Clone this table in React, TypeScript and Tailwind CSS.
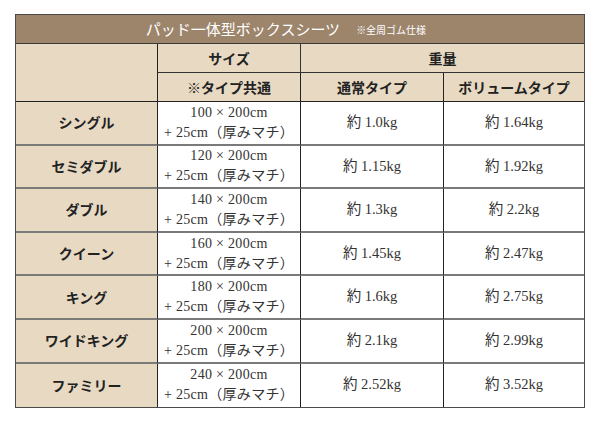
import React from "react";

type Row = { name: string; size: string; normal: string; volume: string };

const rows: Row[] = [
  { name: "シングル", size: "100 × 200cm", normal: "約 1.0kg", volume: "約 1.64kg" },
  { name: "セミダブル", size: "120 × 200cm", normal: "約 1.15kg", volume: "約 1.92kg" },
  { name: "ダブル", size: "140 × 200cm", normal: "約 1.3kg", volume: "約 2.2kg" },
  { name: "クイーン", size: "160 × 200cm", normal: "約 1.45kg", volume: "約 2.47kg" },
  { name: "キング", size: "180 × 200cm", normal: "約 1.6kg", volume: "約 2.75kg" },
  { name: "ワイドキング", size: "200 × 200cm", normal: "約 2.1kg", volume: "約 2.99kg" },
  { name: "ファミリー", size: "240 × 200cm", normal: "約 2.52kg", volume: "約 3.52kg" },
];

const sans = "font-['Noto_Sans_CJK_JP',sans-serif]";
const serif = "font-['Liberation_Serif','Noto_Sans_CJK_JP',serif]";

const App: React.FC = () => {
  return (
    <div className="h-[422px] w-[600px] bg-white pl-[15px] pt-[14px]">
      <div className="w-[570px] border border-[#4a4a4a]">
        <div
          className={`flex h-[29px] items-center justify-center gap-4 border-b border-[#3a3a3a] bg-[#9d856c] pr-[28px] text-white ${sans}`}
        >
          <span className="text-[15px]">パッド一体型ボックスシーツ</span>
          <span className="text-[10px]">※全周ゴム仕様</span>
        </div>
        <div
          className={`grid grid-cols-[142px_143px_143px_140px] grid-rows-[29px_29px_repeat(7,43.6px)] text-[14px] text-[#222] ${sans}`}
        >
          <div className="row-span-2 border-r border-b border-[#222] bg-[#e8d9c3]" />
          <div className="flex items-center justify-center border-r border-b border-[#333] bg-[#e8d9c3] font-bold">
            サイズ
          </div>
          <div className="col-span-2 flex items-center justify-center border-b border-[#333] bg-[#e8d9c3] font-bold">
            重量
          </div>
          <div className="flex items-center justify-center border-r border-b border-[#222] bg-[#e8d9c3] font-bold">
            ※タイプ共通
          </div>
          <div className="flex items-center justify-center border-r border-b border-[#222] bg-[#e8d9c3] font-bold">
            通常タイプ
          </div>
          <div className="flex items-center justify-center border-b border-[#222] bg-[#e8d9c3] font-bold">
            ボリュームタイプ
          </div>
          {rows.map((r, i) => {
            const bb = i < rows.length - 1 ? "border-b-2 border-b-[#7a7a7a]" : "";
            return (
              <React.Fragment key={r.name}>
                <div
                  className={`flex items-center justify-center border-r border-r-[#222] bg-[#e8d9c3] font-bold ${bb}`}
                >
                  {r.name}
                </div>
                <div
                  className={`flex flex-col items-center justify-center border-r border-r-[#222] text-[14px] leading-[20px] tracking-[0.3px] text-[#333] ${serif} ${bb}`}
                >
                  <span>{r.size}</span>
                  <span>+ 25cm（厚みマチ）</span>
                </div>
                <div
                  className={`flex items-center justify-center border-r border-r-[#222] text-[14.5px] text-[#333] ${serif} ${bb}`}
                >
                  {r.normal}
                </div>
                <div
                  className={`flex items-center justify-center text-[14.5px] text-[#333] ${serif} ${bb}`}
                >
                  {r.volume}
                </div>
              </React.Fragment>
            );
          })}
        </div>
      </div>
    </div>
  );
};

export default App;
